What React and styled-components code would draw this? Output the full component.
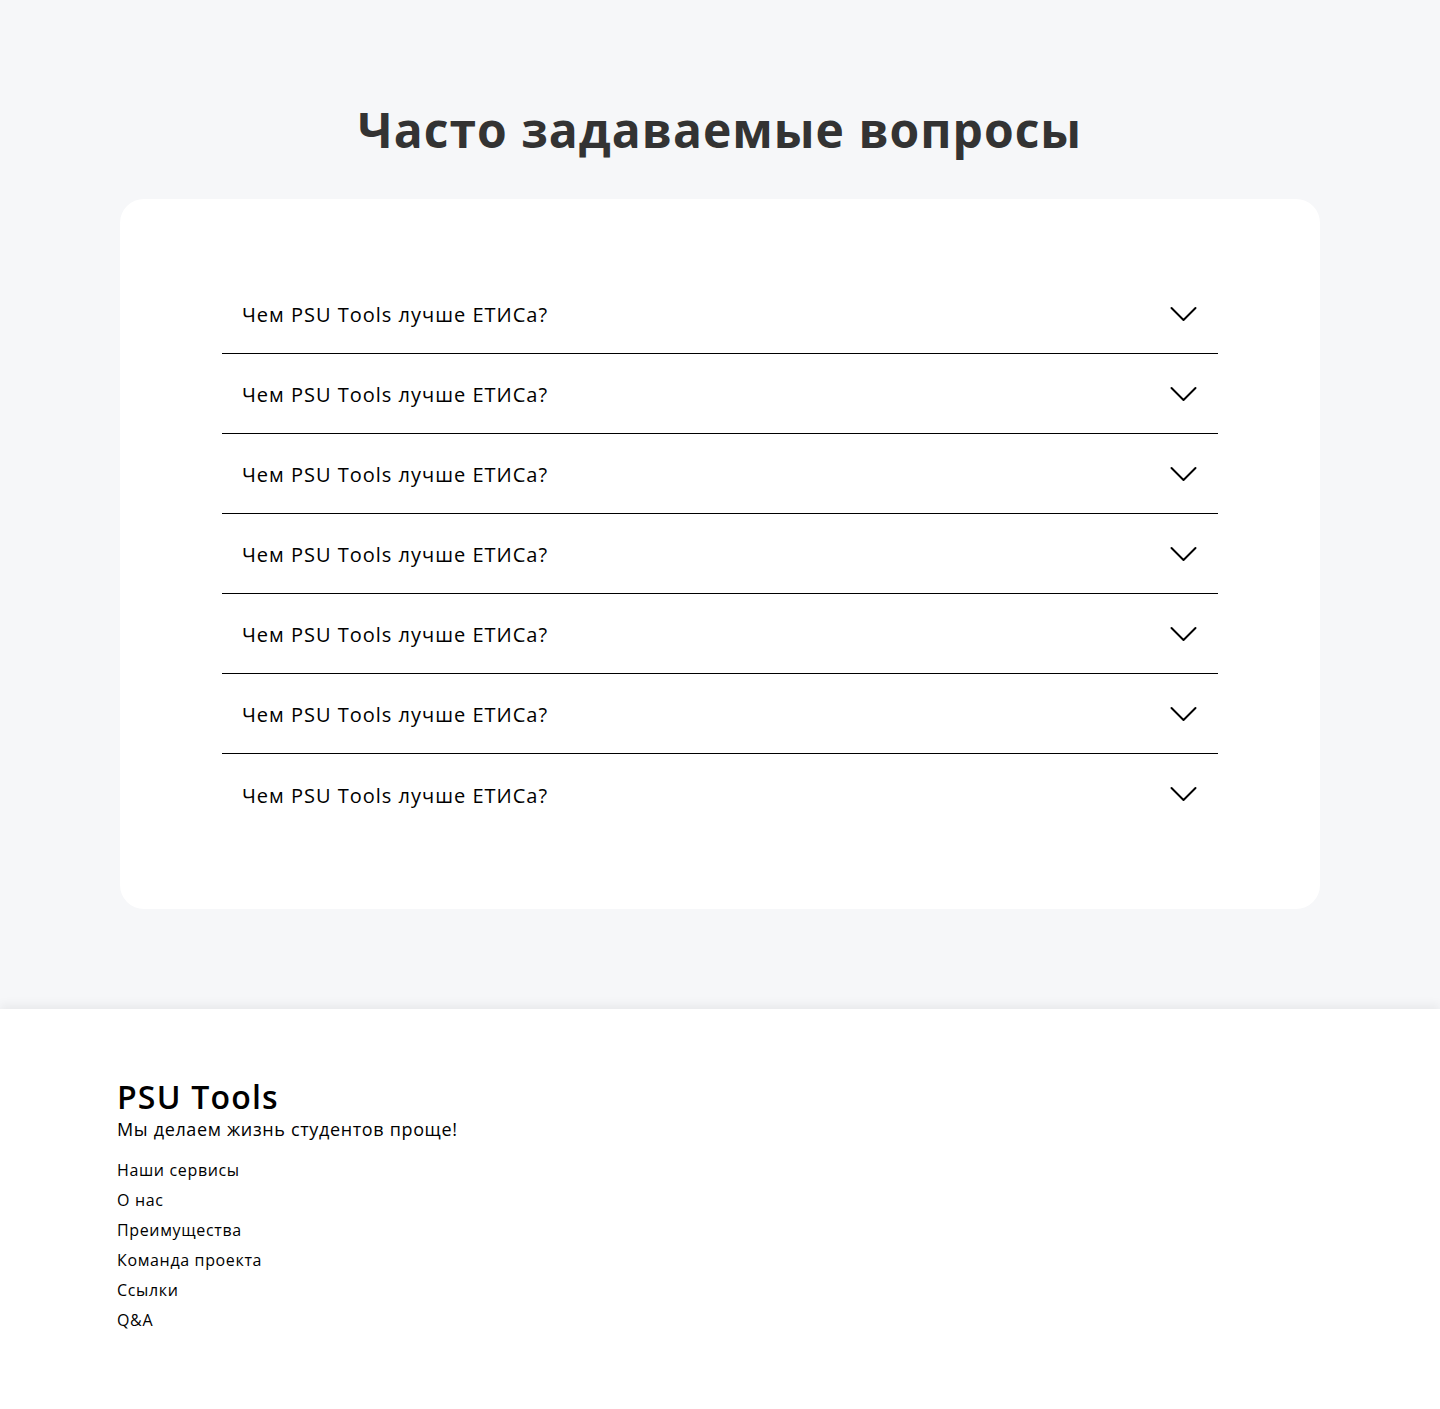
import React from "react";
import styled, { createGlobalStyle } from "styled-components";

const GlobalStyle = createGlobalStyle`
  * { box-sizing: border-box; }
  body {
    margin: 0;
    background: #f6f7f9;
    font-family: "Open Sans", "Noto Sans", sans-serif;
    color: #000;
  }
`;

const questions = Array.from({ length: 7 }, () => "Чем PSU Tools лучше ЕТИСа?");
const links = ["Наши сервисы", "О нас", "Преимущества", "Команда проекта", "Ссылки", "Q&A"];

const Chevron = () => (
  <svg width="27" height="16" viewBox="0 0 27 16" fill="none">
    <path d="M1.5 2L13.5 14L25.5 2" stroke="#000" strokeWidth="2" strokeLinecap="round" strokeLinejoin="round" />
  </svg>
);

const App = () => {
  return (
    <>
      <GlobalStyle />
      <FaqSection>
        <Title>Часто задаваемые вопросы</Title>
        <Card>
          <List>
            {questions.map((q, i) => (
              <Row key={i} $last={i === questions.length - 1}>
                <Question>{q}</Question>
                <Chevron />
              </Row>
            ))}
          </List>
        </Card>
      </FaqSection>
      <Footer>
        <FooterInner>
          <Brand>PSU Tools</Brand>
          <Slogan>Мы делаем жизнь студентов проще!</Slogan>
          <Links>
            {links.map((l) => (
              <FooterLink key={l} href="#">{l}</FooterLink>
            ))}
          </Links>
        </FooterInner>
      </Footer>
    </>
  );
};

const FaqSection = styled.section`
  padding: 96px 120px 100px;
  display: flex;
  flex-direction: column;
  align-items: center;
`;

const Title = styled.h2`
  margin: 0 0 35px;
  font-size: 48px;
  line-height: 68px;
  font-weight: 700;
  color: #333;
  letter-spacing: 1px;
`;

const Card = styled.div`
  width: 1200px;
  background: #fff;
  border-radius: 24px;
  padding: 75px 102px;
`;

const List = styled.div`
  display: flex;
  flex-direction: column;
`;

const Row = styled.div`
  height: 80px;
  display: flex;
  align-items: center;
  justify-content: space-between;
  padding: 0 21px 0 20px;
  border-bottom: ${(p) => (p.$last ? "none" : "1px solid #000")};
`;

const Question = styled.span`
  font-size: 20px;
  font-weight: 500;
  letter-spacing: 1px;
  transform: translateY(1px);
`;

const Footer = styled.footer`
  background: #fff;
  box-shadow: 0 -4px 10px rgba(0, 0, 0, 0.06);
  padding: 68px 117px 75px;
`;

const FooterInner = styled.div`
  display: flex;
  flex-direction: column;
`;

const Brand = styled.div`
  font-size: 32px;
  line-height: 40px;
  font-weight: 600;
  letter-spacing: 1.2px;
`;

const Slogan = styled.div`
  font-size: 18px;
  line-height: 24px;
  letter-spacing: 0.65px;
`;

const Links = styled.nav`
  display: flex;
  flex-direction: column;
  margin-top: 14px;
`;

const FooterLink = styled.a`
  font-size: 16px;
  line-height: 30px;
  color: #000;
  text-decoration: none;
  letter-spacing: 0.65px;
`;

export default App;
